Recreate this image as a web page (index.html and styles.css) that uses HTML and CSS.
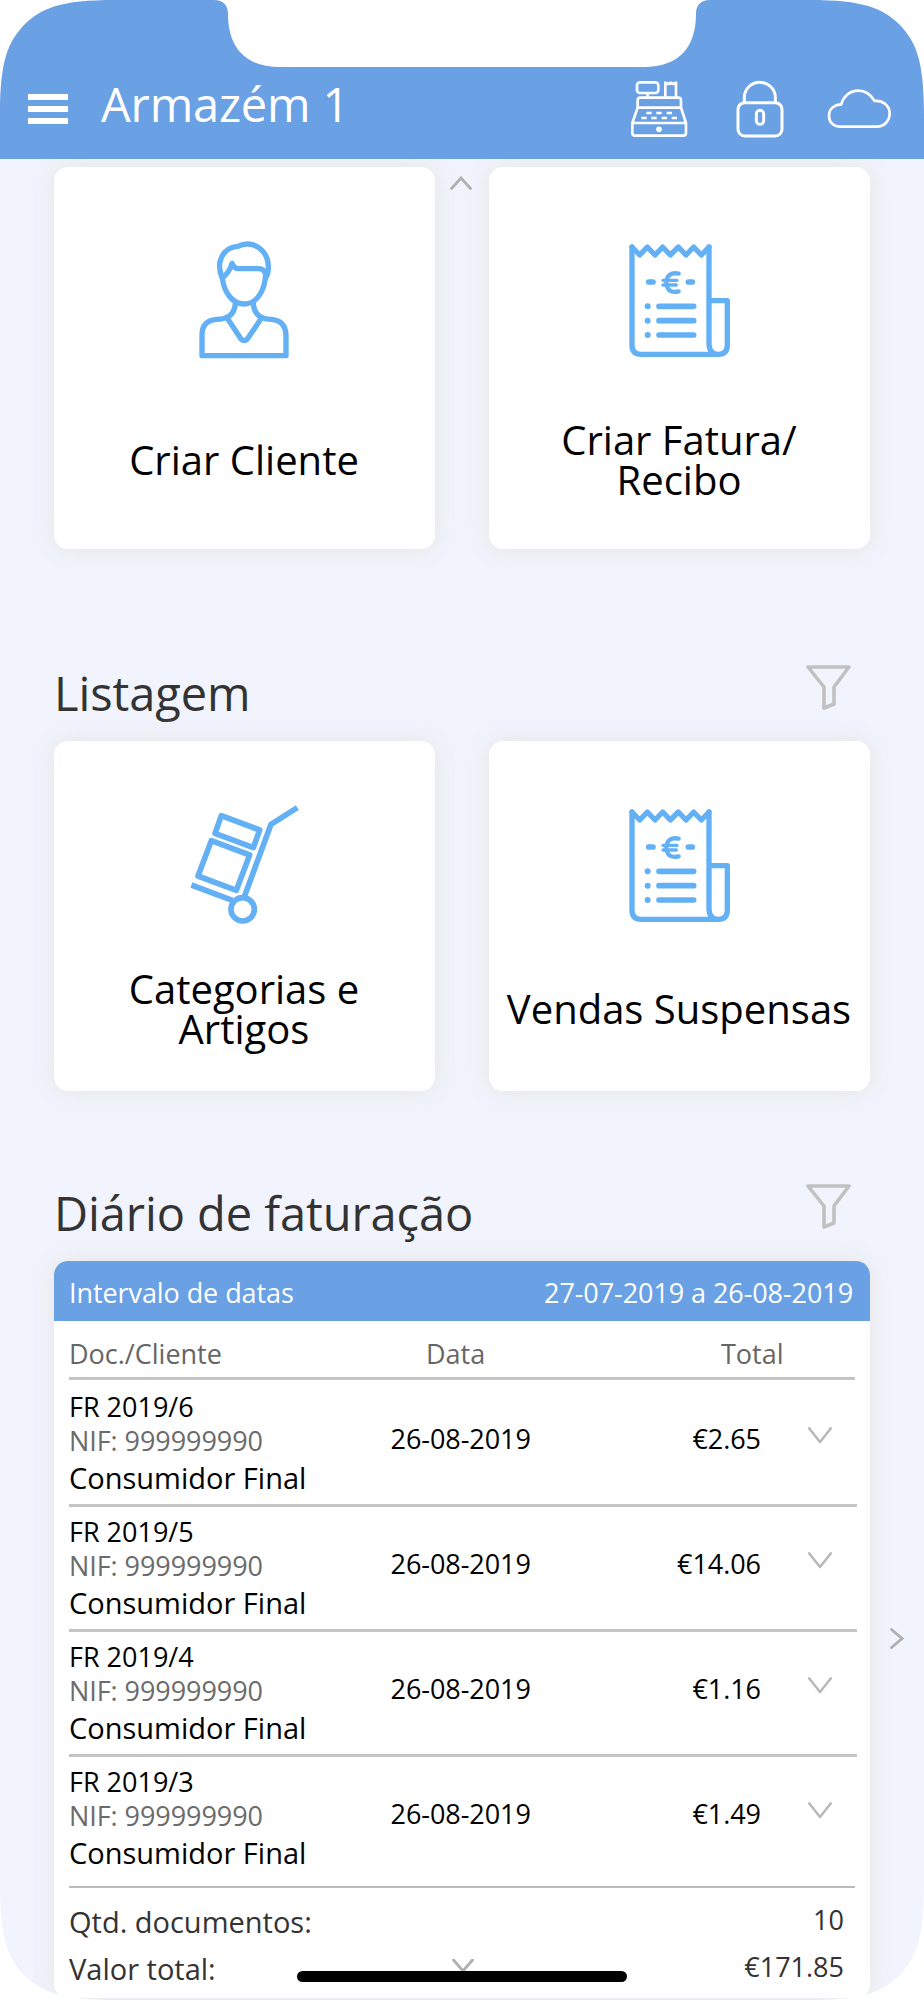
FILE: index.html
```html
<!DOCTYPE html>
<html lang="pt">
<head>
<meta charset="utf-8">
<title>Armazém 1</title>
<link rel="stylesheet" href="styles.css">
</head>
<body>
<svg class="defs" width="0" height="0" aria-hidden="true">
  <symbol id="receipt" viewBox="-15 0 510 480">
    <g fill="none" stroke="#64b0f5" stroke-width="16" stroke-linecap="round" stroke-linejoin="round">
      <path d="M99 81V375Q99 403 126 403H358Q385 403 385 375V242H331M330 81V374Q332 402 357 403"/>
      <path d="M99 81L122 105L145 81L168 105L191 81L214 105L238 81L261 105L284 81L307 105L330 81"/>
      <path d="M149 186H162M268 186H280M180 259H284M180 302H284M180 345H284" stroke-width="17"/>
      <path d="M239 161Q205 154 202 187Q204 222 239 214" stroke-width="13"/>
      <path d="M192 181H234M192 195H232" stroke-width="10"/>
    </g>
    <g fill="#64b0f5"><circle cx="146" cy="259" r="9"/><circle cx="146" cy="302" r="9"/><circle cx="146" cy="345" r="9"/></g>
  </symbol>
  <symbol id="funnel" viewBox="0 0 46 47">
    <path d="M2 3H43L28 23V40L18 44V23Z" fill="none" stroke="#c1c1c1" stroke-width="3.6" stroke-linejoin="round"/>
  </symbol>
  <symbol id="down" viewBox="0 0 26 18">
    <path d="M1.5 1.5L13 16L24.5 1.5" fill="none" stroke="#b7b7b7" stroke-width="2.4" stroke-linejoin="round"/>
  </symbol>
</svg>
<div class="screen">
  <header class="topbar">
    <div class="menu"><i></i><i></i><i></i></div>
    <h1>Armazém 1</h1>
    <nav class="actions">
      <svg class="register" viewBox="508 238 170 174">
        <g fill="none" stroke="#fff" stroke-width="8" stroke-linejoin="round">
          <rect x="526" y="245" width="64" height="32" rx="9"/>
          <path d="M558 277V291M611 291V246L619 250L627 246L635 250L643 246V291"/>
          <path d="M528 321V299Q528 291 536 291H650Q658 291 658 299V321M528 321H658L673 367V397Q673 405 665 405H520Q512 405 512 397V367L528 321M512 367H673"/>
          <path d="M554 337H570M584 337H600M615 337H631M539 352H555M569 352H585M600 352H616M630 352H646"/>
        </g>
        <circle cx="592" cy="386" r="8.5" fill="#fff"/>
      </svg>
      <svg class="lock" viewBox="822 238 144 174">
        <g fill="none" stroke="#fff" stroke-width="9">
          <rect x="828" y="306" width="132" height="100" rx="20"/>
          <path d="M847 306V290A46.500 45 0 0 1 940 290V306"/>
          <rect x="883" y="329" width="22" height="42" rx="11"/>
        </g>
      </svg>
      <svg class="cloud" viewBox="1096 238 194 174">
        <path d="M1135 378H1246C1268 378 1284 360 1284 338C1284 315 1264 299 1239 301C1227 281 1210 270 1190 270C1165 270 1145 287 1139 311C1117 312 1102 325 1102 345C1102 365 1116 378 1135 378Z" fill="none" stroke="#fff" stroke-width="8" stroke-linejoin="round"/>
      </svg>
    </nav>
  </header>

  <main>
    <section class="cards">
      <article class="card">
        <svg class="art" viewBox="0 0 510 480">
          <g fill="none" stroke="#64b0f5" stroke-width="16" stroke-linejoin="round" stroke-linecap="round">
            <path d="M190 174C168 126 193 82 236 79C284 57 328 92 328 142C328 157 325 166 320 174"/>
            <path d="M190 174C195 216 219 252 256 252C293 252 317 214 320 163Q314 146 300 146H238Q226 146 219 130Q212 156 190 174"/>
            <path d="M229 250Q226 298 172 298Q129 302 129 345V407H381V345Q379 302 338 298Q286 298 283 250M205 295L246 357Q256 366 265 357L307 295"/>
          </g>
        </svg>
        <p>Criar Cliente</p>
      </article>
      <article class="card">
        <svg class="art"><use href="#receipt"/></svg>
        <p>Criar Fatura/<br>Recibo</p>
      </article>
    </section>

    <div class="heading">
      <h2>Listagem</h2>
      <svg class="funnel"><use href="#funnel"/></svg>
    </div>

    <section class="cards cards-short">
      <article class="card">
        <svg class="art" viewBox="0 0 510 480">
          <g fill="none" stroke="#64b0f5" stroke-width="17" stroke-linejoin="round">
            <path d="M187 107L302 150L283 203L168 160Z"/>
            <path d="M157 182L272 225L232 331L117 288Z"/>
            <path d="M97 315L220 361M415 83L336 133L256 350"/>
            <circle cx="251" cy="388" r="35"/>
          </g>
        </svg>
        <p>Categorias e<br>Artigos</p>
      </article>
      <article class="card card-receipt">
        <svg class="art"><use href="#receipt"/></svg>
        <p>Vendas Suspensas</p>
      </article>
    </section>

    <div class="heading heading-journal">
      <h2>Diário de faturação</h2>
      <svg class="funnel"><use href="#funnel"/></svg>
    </div>

    <section class="journal">
      <div class="range"><span>Intervalo de datas</span><span>27-07-2019 a 26-08-2019</span></div>
      <div class="columns"><span>Doc./Cliente</span><span>Data</span><span>Total</span></div>
      <div class="row">
        <div class="doc"><div>FR 2019/6</div><div class="nif">NIF: 999999990</div><div class="name">Consumidor Final</div></div>
        <div class="cell">26-08-2019</div><div class="cell amount">€2.65</div><svg class="down"><use href="#down"/></svg>
      </div>
      <div class="row">
        <div class="doc"><div>FR 2019/5</div><div class="nif">NIF: 999999990</div><div class="name">Consumidor Final</div></div>
        <div class="cell">26-08-2019</div><div class="cell amount">€14.06</div><svg class="down"><use href="#down"/></svg>
      </div>
      <div class="row">
        <div class="doc"><div>FR 2019/4</div><div class="nif">NIF: 999999990</div><div class="name">Consumidor Final</div></div>
        <div class="cell">26-08-2019</div><div class="cell amount">€1.16</div><svg class="down"><use href="#down"/></svg>
      </div>
      <div class="row">
        <div class="doc"><div>FR 2019/3</div><div class="nif">NIF: 999999990</div><div class="name">Consumidor Final</div></div>
        <div class="cell">26-08-2019</div><div class="cell amount">€1.49</div><svg class="down"><use href="#down"/></svg>
      </div>
      <div class="totals">
        <div><span>Qtd. documentos:</span><b>10</b></div>
        <div><span>Valor total:</span><b>€171.85</b></div>
      </div>
    </section>
  </main>

  <svg class="hint hint-up" viewBox="0 0 22 14"><path d="M1.500 12.500L11 2L20.500 12.500"/></svg>
  <svg class="hint hint-right" viewBox="0 0 14 22"><path d="M1.500 1.500L12 10.500L1.500 19.500"/></svg>
  <svg class="hint hint-down" viewBox="0 0 22 14"><path d="M1.500 1L11 12L20.500 1"/></svg>
  <div class="home-bar"></div>
</div>
</body>
</html>
```
FILE: styles.css
```css
* { box-sizing: border-box; }
body { margin: 0; background: #fff; font-family: "Open Sans", "Noto Sans", sans-serif; color: #000; }
h1, h2, p { margin: 0; font-weight: 400; }
svg { display: block; flex: none; }
.defs { position: absolute; }

.screen {
  position: relative;
  width: 924px;
  height: 2000px;
  overflow: hidden;
  background: #f1f4fd;
  clip-path: path("M0 115C0 60 8 42 24.5 24.5C42 8 60 0 115 0H214C223 0 228 5 228 14C228 45 243 67 280 67H644C681 67 696 45 696 14C696 5 701 0 710 0H809C864 0 882 8 899.5 24.5C916 42 924 60 924 115V1885C924 1940 916 1958 899.5 1975.5C882 1992 864 2000 809 2000H115C60 2000 42 1992 24.5 1975.5C8 1958 0 1940 0 1885Z");
}

.topbar {
  position: relative;
  z-index: 1;
  display: flex;
  align-items: flex-start;
  height: 158.5px;
  padding: 71.5px 32px 0 28px;
  background: #6aa0e4;
}
.menu { display: flex; flex-direction: column; gap: 6px; width: 40px; margin: 22.5px 33px 0 0; }
.menu i { height: 6px; background: #fff; }
.topbar h1 { font-size: 47px; line-height: 64px; letter-spacing: -.15px; color: #fff; white-space: nowrap; }
.actions { display: flex; margin: 8.3px 0 0 auto; }
.actions svg { height: 58px; }
.register { width: 56.67px; }
.lock { width: 48px; margin-left: 48px; }
.cloud { width: 64.67px; margin-left: 43.33px; }

main { padding: 8.5px 54px 0; }
.cards { display: grid; grid-template-columns: 1fr 1fr; gap: 54px; height: 382px; }
.card {
  display: flex;
  flex-direction: column;
  align-items: center;
  padding: 53px 1px 0 0;
  border-radius: 14px;
  background: #fff;
  box-shadow: 0 0 24px rgb(229 228 227 / .95);
}
.art { width: 170px; height: 160px; }
.card p {
  display: flex;
  align-items: center;
  height: 159px;
  font-size: 40px;
  line-height: 40px;
  text-align: center;
  white-space: nowrap;
}
.cards-short { height: 350px; }
.cards-short .card { padding-top: 39px; }
.cards-short .card-receipt { padding-top: 44px; }
.cards-short p { height: 137px; }
.cards-short .card-receipt p { height: 127px; }

.heading {
  display: flex;
  justify-content: space-between;
  align-items: flex-start;
  height: 192px;
  padding: 112px 18px 0 0;
}
.heading h2 { font-size: 47px; line-height: 64px; letter-spacing: -.08px; color: #333; }
.heading-journal { height: 170px; padding-top: 89.5px; }
.funnel { width: 46px; height: 47px; margin-top: 2.7px; }

.journal {
  height: 736.5px;
  border-radius: 14px;
  overflow: hidden;
  background: #fff;
  box-shadow: 0 0 24px rgb(229 228 227 / .95);
  font-size: 27px;
  line-height: 33px;
}
.range {
  display: flex;
  justify-content: space-between;
  height: 60px;
  padding: 15px 17px 0 15px;
  background: #6aa0e4;
  color: #fff;
  letter-spacing: -.08px;
}
.columns {
  display: grid;
  grid-template-columns: 357px 295px 1fr;
  height: 59px;
  margin: 0 15px;
  padding-top: 16px;
  border-bottom: 3px solid #c4c4c4;
  color: #666;
}
.row {
  display: grid;
  grid-template-columns: 321.5px 160px 210.500px 1fr;
  align-items: start;
  height: 125px;
  margin: 0 13px 0 15px;
  padding-top: 8px;
  border-bottom: 3px solid #c4c4c4;
}
.columns + .row { height: 127px; padding-top: 10px; }
.row:nth-last-child(2) { height: 131px; margin-right: 15px; border-bottom: 2px solid #bbb; }
.nif { padding-top: 1px; color: #6b6b6b; letter-spacing: -.07px; }
.name { font-size: 29px; line-height: 42px; }
.cell { margin-top: 32px; white-space: nowrap; letter-spacing: -.05px; }
.amount { text-align: right; }
.down { width: 26px; height: 18px; margin: 36px 0 0 46px; }

.totals { padding: 10px 26px 0 15px; color: #333; }
.totals div { display: flex; justify-content: space-between; align-items: flex-start; height: 47px; }
.totals span { font-size: 29px; line-height: 47px; }
.totals b { font-weight: 400; line-height: 43px; }

.hint { position: absolute; fill: none; stroke: #b0b0b0; stroke-width: 2.8; stroke-linecap: round; }
.hint-up { left: 450px; top: 176px; width: 22px; height: 14px; }
.hint-right { left: 890px; top: 1628px; width: 14px; height: 22px; }
.hint-down { left: 452px; top: 1959px; width: 22px; height: 14px; }
.home-bar { position: absolute; left: 297px; top: 1971px; width: 330px; height: 11px; border-radius: 6px; background: #000; }
```
